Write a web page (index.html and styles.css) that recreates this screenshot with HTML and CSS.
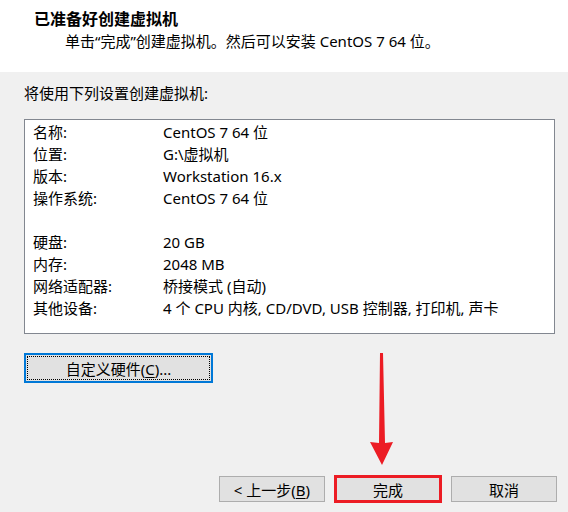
FILE: index.html
```html
<!DOCTYPE html>
<html lang="zh-CN">
<head>
<meta charset="utf-8">
<title>新建虚拟机向导</title>
<link rel="stylesheet" href="styles.css">
</head>
<body>
<div class="window">
  <div class="header">
    <div class="title">已准备好创建虚拟机</div>
    <div class="subtitle">单击“完成”创建虚拟机。然后可以安装 CentOS 7 64 位。</div>
  </div>
  <div class="main">
    <div class="intro">将使用下列设置创建虚拟机:</div>
    <div class="listbox">
      <div class="row"><span class="label">名称:</span><span class="value">CentOS 7 64 位</span></div>
      <div class="row"><span class="label">位置:</span><span class="value">G:\虚拟机</span></div>
      <div class="row"><span class="label">版本:</span><span class="value">Workstation 16.x</span></div>
      <div class="row"><span class="label">操作系统:</span><span class="value">CentOS 7 64 位</span></div>
      <div class="row"></div>
      <div class="row"><span class="label">硬盘:</span><span class="value">20 GB</span></div>
      <div class="row"><span class="label">内存:</span><span class="value">2048 MB</span></div>
      <div class="row"><span class="label">网络适配器:</span><span class="value">桥接模式 (自动)</span></div>
      <div class="row"><span class="label">其他设备:</span><span class="value">4 个 CPU 内核, CD/DVD, USB 控制器, 打印机, 声卡</span></div>
    </div>
    <button class="btn custom">自定义硬件(<u>C</u>)...</button>
  </div>
  <div class="footer">
    <button class="btn nav">&lt; 上一步(<u>B</u>)</button>
    <button class="btn nav finish">完成</button>
    <button class="btn nav">取消</button>
  </div>
  <svg class="arrow" width="30" height="120" viewBox="0 0 30 120">
    <polygon points="14,3 17,3 19,93 27,92 16,115 4,92 13,93" fill="#ec1c24"/>
  </svg>
</div>
</body>
</html>
```
FILE: styles.css
```css
* { box-sizing: border-box; }
html, body { margin: 0; padding: 0; }
body {
  background: #f0f0f0;
  font-family: "Noto Sans", "Noto Sans CJK SC", sans-serif;
  font-size: 15px;
  color: #000;
}
.window {
  position: relative;
  width: 568px;
  height: 512px;
  display: flex;
  flex-direction: column;
}
.header {
  background: #fff;
  height: 72px;
  padding: 8px 0 0 34px;
}
.title {
  font-weight: bold;
  font-size: 16px;
  line-height: 22px;
}
.subtitle {
  padding-left: 31px;
  line-height: 22px;
}
.main {
  padding: 10px 13px 0 24px;
  display: flex;
  flex-direction: column;
  align-items: flex-start;
}
.intro { line-height: 22px; }
.listbox {
  align-self: stretch;
  margin-top: 15px;
  height: 215px;
  background: #fff;
  border: 1px solid #828790;
  padding: 1px 8px 0 8px;
}
.row {
  display: flex;
  height: 22px;
  line-height: 22px;
  white-space: nowrap;
}
.label { width: 130px; flex: none; }
.btn {
  font-family: inherit;
  font-size: 15px;
  color: #000;
  background: #e1e1e1;
  border: 1px solid #adadad;
  padding: 0;
  margin: 0;
}
.btn u { text-underline-offset: 2px; }
.custom {
  margin-top: 19px;
  width: 189px;
  height: 30px;
  border: 2px solid #0078d7;
  outline: 1px dotted #000;
  outline-offset: -4px;
}
.footer {
  margin-top: auto;
  display: flex;
  justify-content: flex-end;
  gap: 10px;
  padding: 0 11px 10px 0;
}
.nav {
  width: 106px;
  height: 26px;
}
.finish {
  outline: 3px solid #ec1c24;
  outline-offset: -2px;
}
.arrow {
  position: absolute;
  left: 366px;
  top: 350px;
}
```
